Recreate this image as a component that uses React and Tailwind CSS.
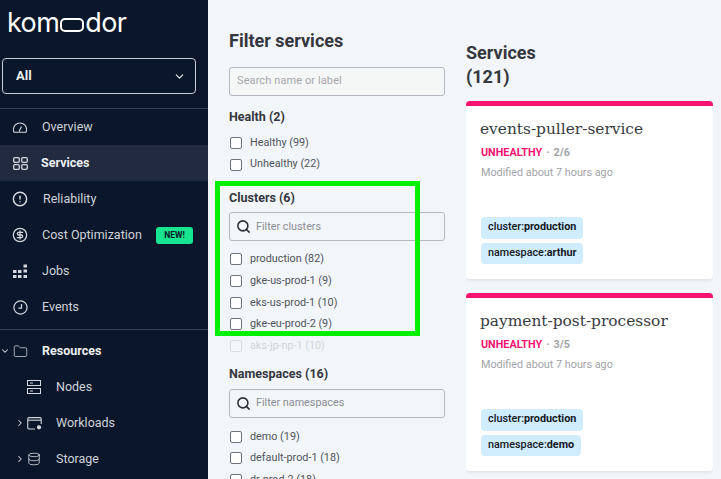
import { ChevronDown, ChevronRight, Search, CircleAlert, CircleDollarSign, Folder, Database } from 'lucide-react'

function GaugeIcon() {
  return (
    <svg width="14" height="11" viewBox="0 0 14 11" fill="none" stroke="currentColor" strokeWidth="1.1">
      <path d="M1 10.300h12c.4-.9.600-1.700.6-2.600A6.600 6.600 0 0 0 7 1 6.600 6.600 0 0 0 .4 7.700c0 .9.200 1.700.6 2.600z" />
      <path d="M6 9.500l2.500-5" />
    </svg>
  )
}

function ServicesIcon() {
  return (
    <svg width="15" height="13" viewBox="0 0 15 13" fill="none" stroke="currentColor" strokeWidth="1.300">
      <rect x="0.700" y="0.700" width="5.600" height="4.600" rx="1.200" />
      <rect x="8.700" y="0.700" width="5.600" height="4.600" rx="1.200" />
      <rect x="0.700" y="7.700" width="5.600" height="4.600" rx="1.200" />
      <rect x="8.700" y="7.700" width="5.600" height="4.600" rx="1.200" />
    </svg>
  )
}

function JobsIcon() {
  return (
    <svg width="15" height="15" viewBox="0 0 15 15" fill="currentColor">
      <rect x="0" y="6" width="3.500" height="3" />
      <rect x="0" y="11" width="3.500" height="3" />
      <rect x="5" y="6" width="3.500" height="3" />
      <rect x="5" y="11" width="3.500" height="3" />
      <rect x="10.500" y="0.500" width="3.500" height="3" />
      <rect x="10.500" y="5.500" width="3.500" height="3" />
      <rect x="10.500" y="11" width="3.500" height="3" />
    </svg>
  )
}

function ClockIcon() {
  return (
    <svg width="15" height="15" viewBox="0 0 15 15" fill="none" stroke="currentColor" strokeWidth="1.200">
      <circle cx="7.500" cy="7.500" r="6.600" />
      <path d="M8.500 4v4.200H5.500" />
    </svg>
  )
}

function NodesIcon() {
  return (
    <svg width="14" height="14" viewBox="0 0 14 14" fill="none" stroke="currentColor" strokeWidth="1">
      <rect x="0.500" y="0.500" width="13" height="5" />
      <rect x="0.500" y="8.500" width="13" height="5" />
      <path d="M3 3h3M3 11h3" />
    </svg>
  )
}

function WorkloadsIcon() {
  return (
    <svg width="15" height="13" viewBox="0 0 15 13" fill="none" stroke="currentColor" strokeWidth="1.100">
      <path d="M8 12H2a1.200 1.200 0 0 1-1.200-1.200V1.800A1.200 1.200 0 0 1 2 .6h11a1.200 1.200 0 0 1 1.200 1.200V7" />
      <path d="M1 3.200h13" />
      <circle cx="12" cy="10.300" r="1.600" fill="currentColor" />
    </svg>
  )
}

function NavRow({ icon, label, active, bold, arrow, indent, badge, textLeft }) {
  return (
    <div className={`relative flex h-9 items-center ${active ? 'bg-[#212a3e]' : ''}`}>
      {arrow && <span className={`flex w-3 justify-center text-[#d5d8de] ${indent ? 'ml-[14px]' : '-ml-[1px]'}`}>{arrow}</span>}
      {!arrow && <span className={indent ? 'w-[26px]' : 'w-[12px]'} />}
      <span className={`flex w-4 items-center justify-center text-[#d5d8de] ${arrow && !indent ? 'ml-[1px]' : ''}`}>{icon}</span>
      <span className={`text-[12.500px] ${bold ? 'font-bold text-[#eef0f3]' : 'text-[#cfd3da]'} ${textLeft}`}>
        {label}
      </span>
      {badge && (
        <span className="absolute left-[156px] top-[10px] flex h-[17px] w-[37px] items-center justify-center rounded-[3px] bg-[#17e58f] text-[8.500px] font-bold text-[#0a1629]">
          NEW!
        </span>
      )}
    </div>
  )
}

function Sidebar() {
  return (
    <aside className="h-full w-[208px] shrink-0 overflow-hidden bg-[#0a1629] font-['Roboto',sans-serif]">
      <div className="flex h-[58px] items-start pl-[7px] pt-[4px] font-['Inter',sans-serif] text-[27px] leading-[38px] font-normal tracking-[-0.6px] text-white">
        <span>kom</span>
        <span className="mt-[14px] mr-[1px] ml-[1px] h-[14px] w-[24px] rounded-[5px] border-2 border-white" />
        <span>dor</span>
      </div>
      <div className="mx-[2px] flex h-[36px] w-[194px] items-center justify-between rounded border border-[#c9ccd2] pl-[13px] pr-[9px] text-[13px] font-bold text-[#eef0f3]">
        All
        <ChevronDown size={13} strokeWidth={2} />
      </div>
      <div className="mt-[14px] h-px bg-[#3a4150]" />
      <NavRow icon={<GaugeIcon />} label="Overview" textLeft="ml-[14px]" />
      <NavRow icon={<ServicesIcon />} label="Services" active bold textLeft="ml-[13px]" />
      <NavRow icon={<CircleAlert size={16} strokeWidth={2.200} />} label="Reliability" textLeft="ml-[15px]" />
      <NavRow icon={<CircleDollarSign size={16} strokeWidth={1.900} />} label="Cost Optimization" badge textLeft="ml-[14px]" />
      <NavRow icon={<JobsIcon />} label="Jobs" textLeft="ml-[14px]" />
      <NavRow icon={<ClockIcon />} label="Events" textLeft="ml-[14px]" />
      <div className="mt-[4px] h-px bg-[#3a4150]" />
      <div className="mt-[3px]">
        <NavRow
          arrow={<ChevronDown size={10} strokeWidth={2.500} />}
          icon={<Folder size={15} strokeWidth={1.200} />}
          label="Resources"
          bold
          textLeft="ml-[14px]"
        />
        <NavRow indent icon={<NodesIcon />} label="Nodes" textLeft="ml-[14px]" />
        <NavRow
          indent
          arrow={<ChevronRight size={10} strokeWidth={2.500} />}
          icon={<WorkloadsIcon />}
          label="Workloads"
          textLeft="ml-[14px]"
        />
        <NavRow
          indent
          arrow={<ChevronRight size={10} strokeWidth={2.500} />}
          icon={<Database size={14} strokeWidth={1.400} />}
          label="Storage"
          textLeft="ml-[14px]"
        />
      </div>
    </aside>
  )
}

function CheckRow({ label, faded }) {
  return (
    <div className={`flex h-[21.700px] items-center gap-[8px] pl-[1px] ${faded ? 'opacity-20' : ''}`}>
      <span className="h-[12px] w-[12px] rounded-[2px] border border-[#6f737b] bg-white" />
      <span className="text-[10.800px] text-[#50545c]">{label}</span>
    </div>
  )
}

function FilterInput({ placeholder }) {
  return (
    <div className="flex h-[29px] w-[216px] items-center rounded-[3px] border border-[#b4b8c2] pl-[6px]">
      <Search size={15} strokeWidth={2.500} className="text-[#2c3038]" />
      <span className="ml-[5px] text-[10.800px] text-[#8a8d93]">{placeholder}</span>
    </div>
  )
}

function FilterColumn() {
  return (
    <section className="h-full w-[258px] shrink-0 overflow-hidden pl-[21px] font-['Roboto',sans-serif]">
      <h2 className="mt-[29px] text-[18px] leading-[24px] font-bold text-[#34373e]">Filter services</h2>
      <div className="mt-[14px] flex h-[29px] w-[216px] items-center rounded-[3px] border border-[#b4b8c2] bg-[#f5f6f6] pl-[7px] text-[11px] tracking-[0.1px] text-[#a5a7ac]">
        Search name or label
      </div>
      <h3 className="mt-[13px] text-[12.500px] leading-[16px] font-bold text-[#34373e]">Health (2)</h3>
      <div className="mt-[7px]">
        <CheckRow label="Healthy (99)" />
        <CheckRow label="Unhealthy (22)" />
      </div>
      <h3 className="mt-[15px] text-[12.500px] leading-[16px] font-bold text-[#34373e]">Clusters (6)</h3>
      <div className="mt-[6px]">
        <FilterInput placeholder="Filter clusters" />
      </div>
      <div className="mt-[7px]">
        <CheckRow label="production (82)" />
        <CheckRow label="gke-us-prod-1 (9)" />
        <CheckRow label="eks-us-prod-1 (10)" />
        <CheckRow label="gke-eu-prod-2 (9)" />
        <CheckRow label="aks-jp-np-1 (10)" faded />
      </div>
      <h3 className="mt-[9px] text-[12.500px] leading-[16px] font-bold text-[#34373e]">Namespaces (16)</h3>
      <div className="mt-[7px]">
        <FilterInput placeholder="Filter namespaces" />
      </div>
      <div className="mt-[8px]">
        <CheckRow label="demo (19)" />
        <CheckRow label="default-prod-1 (18)" />
        <CheckRow label="dr-prod-2 (18)" />
      </div>
    </section>
  )
}

function ServiceCard({ name, ready, namespace }) {
  return (
    <div className="h-[178px] w-[247px] shrink-0 rounded-[4px] border-t-[5px] border-[#fa1270] bg-white px-[15px] pt-[11px] shadow-[0_1px_3px_rgba(40,50,70,0.12)]">
      <div className="-ml-[1px] font-['DejaVu_Serif',serif] text-[15.400px] leading-[24px] text-[#383b42]">{name}</div>
      <div className="mt-[5px] flex items-center text-[10.800px] leading-[14px] font-bold text-[#a1a3a8]">
        <span className="text-[#fa1270]">UNHEALTHY</span>
        <span className="mx-[4px]">·</span>
        <span>{ready}</span>
      </div>
      <div className="mt-[6px] text-[10.800px] leading-[14px] text-[#a1a3a8]">Modified about 7 hours ago</div>
      <div className="mt-[36.500px] flex flex-col items-start gap-[4px]">
        <span className="flex h-[22px] items-center rounded-[4px] bg-[#d0ecff] px-[7px] text-[10.800px] font-medium text-[#14181f]">
          cluster:<b>production</b>
        </span>
        <span className="flex h-[21px] items-center rounded-[4px] bg-[#d0ecff] px-[7px] text-[10.800px] font-medium text-[#14181f]">
          namespace:<b>{namespace}</b>
        </span>
      </div>
    </div>
  )
}

export default function App() {
  return (
    <div className="relative flex h-[479px] w-[721px] overflow-hidden bg-[#f2f5f9]">
      <Sidebar />
      <FilterColumn />
      <section className="h-full overflow-hidden font-['Roboto',sans-serif]">
        <h2 className="mt-[41px] text-[18px] leading-[24px] font-bold text-[#34373e]">
          Services
          <br />
          (121)
        </h2>
        <div className="mt-[12px] flex flex-col gap-[14px]">
          <ServiceCard name="events-puller-service" ready="2/6" namespace="arthur" />
          <ServiceCard name="payment-post-processor" ready="3/5" namespace="demo" />
        </div>
      </section>
      <div className="pointer-events-none absolute left-[215px] top-[181px] h-[155px] w-[205px] border-[5px] border-[#00f000]" />
    </div>
  )
}
